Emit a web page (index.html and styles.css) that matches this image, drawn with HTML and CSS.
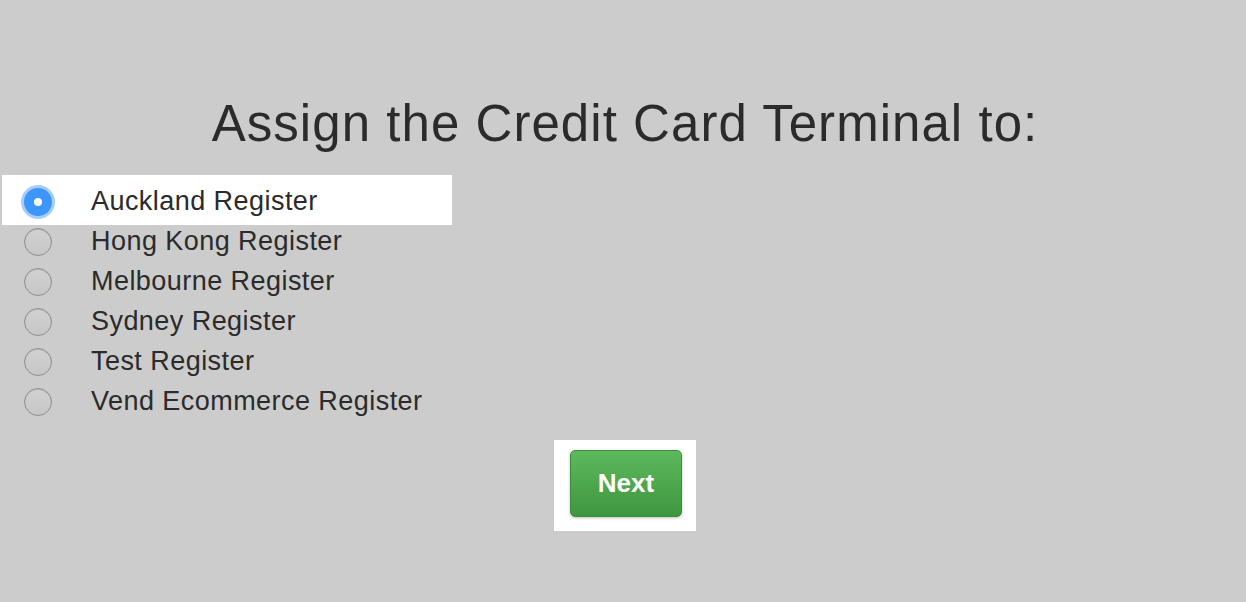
FILE: index.html
```html
<!DOCTYPE html>
<html lang="en">
<head>
<meta charset="utf-8">
<title>Assign Credit Card Terminal</title>
<link rel="stylesheet" href="styles.css">
</head>
<body>
<main class="page">
  <h1 class="title">Assign the Credit Card Terminal to:</h1>
  <ul class="options">
    <li class="option is-selected"><span class="radio"></span><span class="label">Auckland Register</span></li>
    <li class="option"><span class="radio"></span><span class="label">Hong Kong Register</span></li>
    <li class="option"><span class="radio"></span><span class="label">Melbourne Register</span></li>
    <li class="option"><span class="radio"></span><span class="label">Sydney Register</span></li>
    <li class="option"><span class="radio"></span><span class="label">Test Register</span></li>
    <li class="option"><span class="radio"></span><span class="label">Vend Ecommerce Register</span></li>
  </ul>
  <div class="actions">
    <div class="action-box"><button class="btn-next" type="button">Next</button></div>
  </div>
</main>
</body>
</html>
```
FILE: styles.css
```css
html, body {
  margin: 0;
  padding: 0;
}
body {
  background: #cccccc;
  color: #2b2b2b;
  font-family: "Liberation Sans", Arial, sans-serif;
  width: 1246px;
  height: 602px;
  overflow: hidden;
}
.page {
  display: flex;
  flex-direction: column;
  padding-top: 96px;
}
.title {
  margin: 0;
  padding-left: 4px;
  font-size: 51px;
  font-weight: normal;
  letter-spacing: 1.05px;
  line-height: 56px;
  text-align: center;
  color: #2b2b2b;
}
.options {
  list-style: none;
  margin: 30px 0 0 2px;
  padding: 0;
  display: flex;
  flex-direction: column;
}
.option {
  height: 40px;
  display: flex;
  align-items: center;
  width: 450px;
}
.option.is-selected {
  background: #ffffff;
  margin-top: -7px;
  padding-top: 7px;
  padding-bottom: 3px;
  margin-bottom: -3px;
  height: 40px;
}
.radio {
  box-sizing: border-box;
  width: 28px;
  height: 28px;
  border-radius: 50%;
  margin-left: 22px;
  margin-right: 39px;
  border: 1px solid #8e8e8e;
  background: linear-gradient(#d2d2d2, #c6c6c6);
  box-shadow: inset 0 1px 1px rgba(0,0,0,0.12);
  flex: none;
  display: flex;
  align-items: center;
  justify-content: center;
}
.is-selected .radio {
  border: none;
  background: #3d97fb;
  box-shadow: 0 0 0 3px #a7cdfb;
}
.is-selected .radio::after {
  content: "";
  width: 8px;
  height: 8px;
  border-radius: 50%;
  background: #ffffff;
}
.label {
  font-size: 27px;
  letter-spacing: 0.45px;
  line-height: 40px;
  color: #2b2b2b;
  margin-top: -3px;
}
.actions {
  display: flex;
  justify-content: center;
  margin-top: 18px;
  padding-left: 4px;
}
.action-box {
  background: #ffffff;
  width: 142px;
  height: 91px;
  box-sizing: border-box;
  padding: 10px 14px 0 16px;
}
.btn-next {
  width: 112px;
  height: 67px;
  border: 1px solid #3d8b3d;
  border-radius: 5px;
  background: linear-gradient(#5db95d, #3f963f);
  box-shadow: 0 1px 3px rgba(0,0,0,0.25);
  color: #ffffff;
  font-family: "Liberation Sans", Arial, sans-serif;
  font-size: 26px;
  font-weight: bold;
  padding: 0;
  cursor: pointer;
}
```
